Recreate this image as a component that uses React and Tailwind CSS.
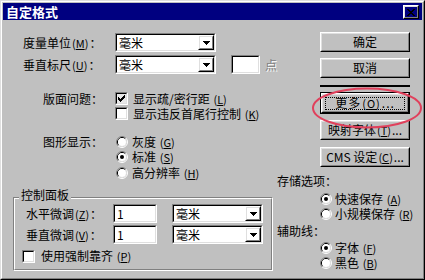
import React from "react";

const Raised = ({ className = "", children }) => (
  <div className={`border border-t-white border-l-white border-b-black border-r-black ${className}`}>
    <div className="h-full w-full border border-t-[#dfdfdf] border-l-[#dfdfdf] border-b-[#808080] border-r-[#808080] flex items-center justify-center">
      {children}
    </div>
  </div>
);

const Sunken = ({ className = "", children }) => (
  <div className={`border border-t-[#808080] border-l-[#808080] border-b-white border-r-white ${className}`}>
    <div className="h-full border border-t-black border-l-black border-b-[#dfdfdf] border-r-[#dfdfdf] bg-white flex items-center">
      {children}
    </div>
  </div>
);

const Arrow = () => (
  <svg width="7" height="4" viewBox="0 0 7 4" shapeRendering="crispEdges">
    <rect x="0" y="0" width="7" height="1" fill="#000" />
    <rect x="1" y="1" width="5" height="1" fill="#000" />
    <rect x="2" y="2" width="3" height="1" fill="#000" />
    <rect x="3" y="3" width="1" height="1" fill="#000" />
  </svg>
);

const Combo = ({ w, value }) => (
  <Sunken className={`h-[19px] ${w}`}>
    <span className="flex-1 pl-[2px] leading-[13px]">{value}</span>
    <Raised className="h-full w-[16px]">
      <Arrow />
    </Raised>
  </Sunken>
);

const Mn = ({ k }) => (
  <span className="text-[11px] mx-[1px]">
    (<u className="underline-offset-1">{k}</u>)
  </span>
);

const Check = ({ checked, fill = "bg-white" }) => (
  <div className="w-[13px] h-[13px] border border-t-[#808080] border-l-[#808080] border-b-white border-r-white shrink-0">
    <div className={`h-full border border-t-black border-l-black border-b-[#dfdfdf] border-r-[#dfdfdf] ${fill} flex items-center justify-center`}>
      {checked && (
        <svg width="7" height="7" viewBox="0 0 7 7" shapeRendering="crispEdges">
          <rect x="6" y="0" width="1" height="1" />
          <rect x="5" y="1" width="2" height="1" />
          <rect x="0" y="2" width="1" height="1" />
          <rect x="4" y="2" width="3" height="1" />
          <rect x="0" y="3" width="2" height="1" />
          <rect x="3" y="3" width="3" height="1" />
          <rect x="0" y="4" width="5" height="1" />
          <rect x="1" y="5" width="3" height="1" />
          <rect x="2" y="6" width="1" height="1" />
        </svg>
      )}
    </div>
  </div>
);

const Radio = ({ checked }) => (
  <svg width="12" height="12" viewBox="0 0 12 12" className="shrink-0">
    <path d="M2.11 9.89A5.5 5.5 0 0 1 9.89 2.11" stroke="#808080" fill="none" />
    <path d="M9.89 2.11A5.5 5.5 0 0 1 2.11 9.89" stroke="#fff" fill="none" />
    <path d="M2.82 9.18A4.5 4.5 0 0 1 9.18 2.82" stroke="#000" fill="none" />
    <path d="M9.18 2.82A4.5 4.5 0 0 1 2.82 9.18" stroke="#dfdfdf" fill="none" />
    <circle cx="6" cy="6" r="4" fill="#fff" />
    {checked && <circle cx="6" cy="6" r="2" fill="#000" />}
  </svg>
);

const RadioRow = ({ checked, children, h = "h-[15.5px]", gap = "gap-[4px]" }) => (
  <div className={`${h} flex items-center ${gap}`}>
    <Radio checked={checked} />
    <span>{children}</span>
  </div>
);

const CloseX = () => (
  <svg width="8" height="7" viewBox="0 0 8 7" shapeRendering="crispEdges">
    {[0, 1, 2, 3, 4, 5, 6].map((r) => {
      const l = r <= 3 ? r : 6 - r;
      return (
        <g key={r}>
          <rect x={l} y={r} width="2" height="1" fill="#000" />
          <rect x={6 - l} y={r} width="2" height="1" fill="#000" />
        </g>
      );
    })}
  </svg>
);

export default function App() {
  return (
    <div className="relative w-[425px] h-[280px] bg-[#c0c0c0] text-black text-[12px] leading-[14px] font-['Noto_Sans_CJK_SC',sans-serif] select-none overflow-hidden">
      <div className="h-full border border-t-[#dfdfdf] border-l-[#dfdfdf] border-b-black border-r-black">
        <div className="h-full border border-t-white border-l-white border-b-[#808080] border-r-[#808080] p-px flex flex-col">
          {/* title bar */}
          <div className="h-[17px] bg-[#000080] flex items-start justify-between pl-[3px] pr-[3px]">
            <span className="text-white font-bold text-[13px] leading-[17px]">自定格式</span>
            <Raised className="mt-[2px] w-[16px] h-[14px]">
              <CloseX />
            </Raised>
          </div>

          <div className="flex">
            {/* left column */}
            <div className="w-[274px] flex flex-col">
              <div className="mt-[13px] h-[19px] flex items-center">
                <div className="w-[112px] pl-[20px]">
                  度量单位<Mn k="M" />：
                </div>
                <Combo w="w-[101px]" value="毫米" />
              </div>
              <div className="mt-[3px] h-[19px] flex items-center">
                <div className="w-[112px] pl-[20px]">
                  垂直标尺<Mn k="U" />：
                </div>
                <Combo w="w-[101px]" value="毫米" />
                <Sunken className="ml-[15px] w-[29px] h-[19px]" />
                <span className="ml-[5px] text-[#808080] [text-shadow:1px_1px_0_#fff]">点</span>
              </div>

              <div className="mt-[17px] flex">
                <div className="w-[112px] pl-[40px] h-[15px] flex items-center">版面问题：</div>
                <div className="flex flex-col">
                  <div className="h-[15px] flex items-center gap-[5px]">
                    <Check checked fill="bg-[#e8e8e8]" />
                    <span>
                      显示疏/密行距 <Mn k="L" />
                    </span>
                  </div>
                  <div className="h-[15px] flex items-center gap-[5px]">
                    <Check />
                    <span>
                      显示违反首尾行控制 <Mn k="K" />
                    </span>
                  </div>
                </div>
              </div>

              <div className="mt-[13px] flex">
                <div className="w-[112px] pl-[40px] h-[15.5px] flex items-center">图形显示：</div>
                <div className="flex flex-col pl-[1px]">
                  <RadioRow>
                    灰度 <Mn k="G" />
                  </RadioRow>
                  <RadioRow checked>
                    标准 <Mn k="S" />
                  </RadioRow>
                  <RadioRow>
                    高分辨率 <Mn k="H" />
                  </RadioRow>
                </div>
              </div>

              {/* group box */}
              <div className="mt-[16.5px] ml-[10px] w-[260px] h-[74px] border border-t-[#808080] border-l-[#808080] border-b-white border-r-white">
                <div className="h-full border border-t-white border-l-white border-b-[#808080] border-r-[#808080] flex flex-col">
                  <div className="-mt-[11px] ml-[4px] w-fit px-[2px] bg-[#c0c0c0] leading-[14px]">控制面板</div>
                  <div className="mt-[2px] h-[19px] flex items-center">
                    <div className="w-[98px] pl-[11px]">
                      水平微调<Mn k="Z" />：
                    </div>
                    <Sunken className="w-[44px] h-[19px]">
                      <span className="pl-[2px]">1</span>
                    </Sunken>
                    <div className="ml-[15px]">
                      <Combo w="w-[91px]" value="毫米" />
                    </div>
                  </div>
                  <div className="mt-[2px] h-[19px] flex items-center">
                    <div className="w-[98px] pl-[11px]">
                      垂直微调<Mn k="V" />：
                    </div>
                    <Sunken className="w-[44px] h-[19px]">
                      <span className="pl-[2px]">1</span>
                    </Sunken>
                    <div className="ml-[15px]">
                      <Combo w="w-[91px]" value="毫米" />
                    </div>
                  </div>
                  <div className="mt-[4.5px] h-[15px] flex items-center gap-[6px] pl-[7px]">
                    <Check />
                    <span>
                      使用强制靠齐 <Mn k="P" />
                    </span>
                  </div>
                </div>
              </div>
            </div>

            {/* right column */}
            <div className="w-[145px] flex flex-col">
              <div className="ml-[43px] w-[90px] flex flex-col">
                <Raised className="mt-[12px] h-[20px] w-[90px]">确定</Raised>
                <Raised className="mt-[6px] h-[20px] w-[90px]">取消</Raised>
                <div className="mt-[7px] h-[2px] w-[90px] bg-black" />
                <div className="mt-[5px] h-[22px] w-[90px] border border-black">
                  <Raised className="h-full w-full">
                    <div className="w-[80px] h-[13px] border border-dotted border-black flex items-center justify-center tracking-[1px]">
                      更多<Mn k="O" />...
                    </div>
                  </Raised>
                </div>
                <Raised className="mt-[6px] h-[20px] w-[90px]">
                  映射字体 <Mn k="T" />...
                </Raised>
                <Raised className="mt-[7px] h-[20px] w-[90px]">
                  CMS 设定 <Mn k="C" />...
                </Raised>
              </div>

              <div className="mt-[7px] h-[14px] flex items-center">存储选项：</div>
              <div className="mt-[3.5px] ml-[43px] flex flex-col">
                <RadioRow checked h="h-[15px]" gap="gap-[3px]">
                  快速保存 <Mn k="A" />
                </RadioRow>
                <RadioRow h="h-[15px]" gap="gap-[3px]">
                  小规模保存 <Mn k="R" />
                </RadioRow>
              </div>
              <div className="mt-[2.5px] h-[14px] flex items-center">辅助线：</div>
              <div className="mt-[2.5px] ml-[43px] flex flex-col">
                <RadioRow checked h="h-[15px]" gap="gap-[3px]">
                  字体 <Mn k="F" />
                </RadioRow>
                <RadioRow h="h-[15px]" gap="gap-[3px]">
                  黑色 <Mn k="B" />
                </RadioRow>
              </div>
            </div>
          </div>
        </div>
      </div>

      {/* red annotation ellipse */}
      <svg className="absolute left-0 top-0 pointer-events-none" width="425" height="280">
        <ellipse cx="367" cy="108" rx="54" ry="19.5" fill="none" stroke="#e0405c" strokeWidth="2" />
      </svg>
    </div>
  );
}
